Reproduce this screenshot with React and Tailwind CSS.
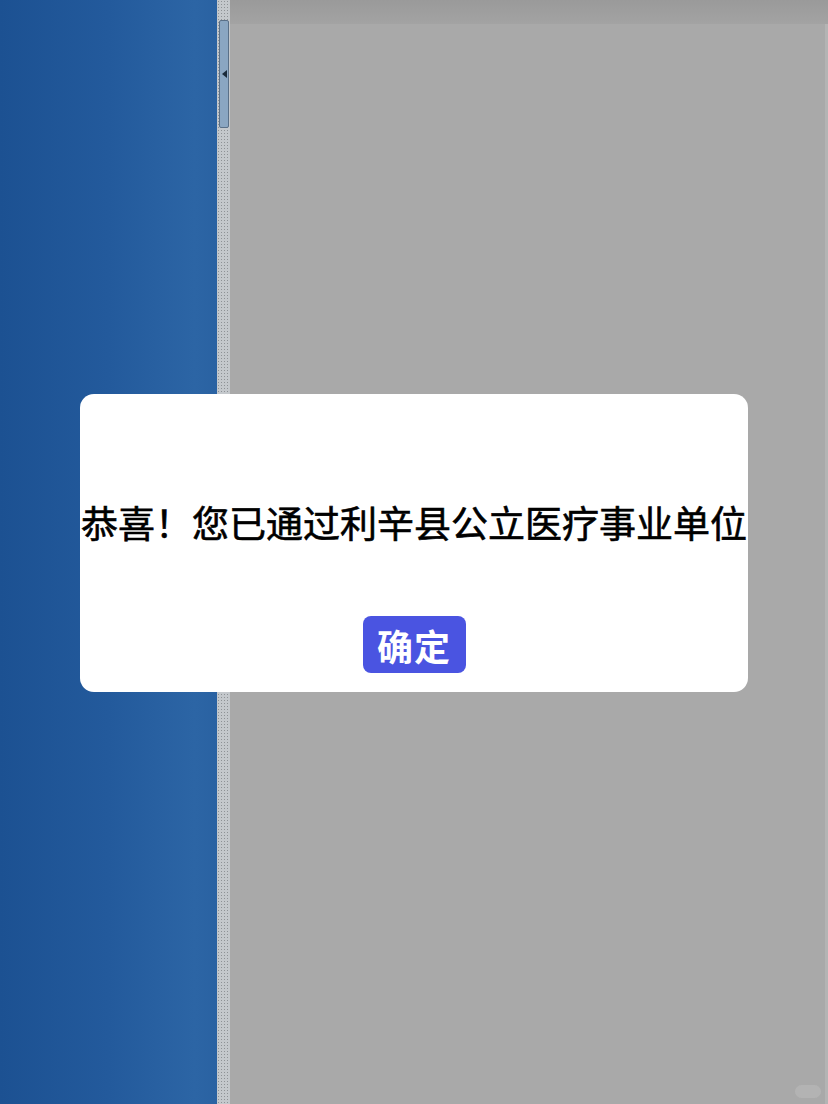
export default function App() {
  return (
    <div className="relative w-[828px] h-[1104px] overflow-hidden flex bg-[#a9a9a9]" style={{ fontFamily: '"Noto Sans CJK SC", "Noto Sans", sans-serif' }}>
      <div className="w-[217px] h-full bg-[linear-gradient(90deg,#1c5192_0%,#235a9c_50%,#2c65a5_90%,#2a62a2_100%)]" />
      <div className="relative w-[13px] h-full bg-[#c4c8cc] bg-[radial-gradient(#8e9296_0.8px,transparent_0.9px)] bg-[length:3px_3px]">
        <div className="absolute left-[2px] top-[20px] w-[10px] h-[108px] rounded-[2px] border border-[#5a7088] bg-[#8aa6c2] flex items-center justify-center">
          <div className="w-0 h-0 border-y-[4px] border-y-transparent border-r-[5px] border-r-[#1a2a3a]" />
        </div>
      </div>
      <div className="flex-1 h-full flex flex-col">
        <div className="h-[24px] bg-[linear-gradient(180deg,#9a9a9a,#a3a3a3)]" />
        <div className="flex-1 flex">
          <div className="flex-1 bg-[#a9a9a9]" />
          <div className="w-[3px] bg-[#b4b4b4]" />
        </div>
      </div>
      <div className="absolute left-[80px] top-[394px] w-[668px] h-[298px] bg-white rounded-[14px] flex flex-col items-center">
        <div className="mt-[100px] h-[56px] flex items-center justify-center whitespace-nowrap text-[37px] font-normal text-black leading-none [-webkit-text-stroke:0.6px_black]">
          恭喜！您已通过利辛县公立医疗事业单位
        </div>
        <div className="mt-[66px] w-[103px] h-[57px] rounded-[8px] bg-[#4a54e1] flex items-center justify-center text-white text-[36px] font-bold leading-none tracking-[1px]">
          确定
        </div>
      </div>
      <div className="absolute left-[795px] top-[1085px] w-[26px] h-[13px] rounded-full bg-[#b8b8b8] opacity-70" />
    </div>
  );
}
